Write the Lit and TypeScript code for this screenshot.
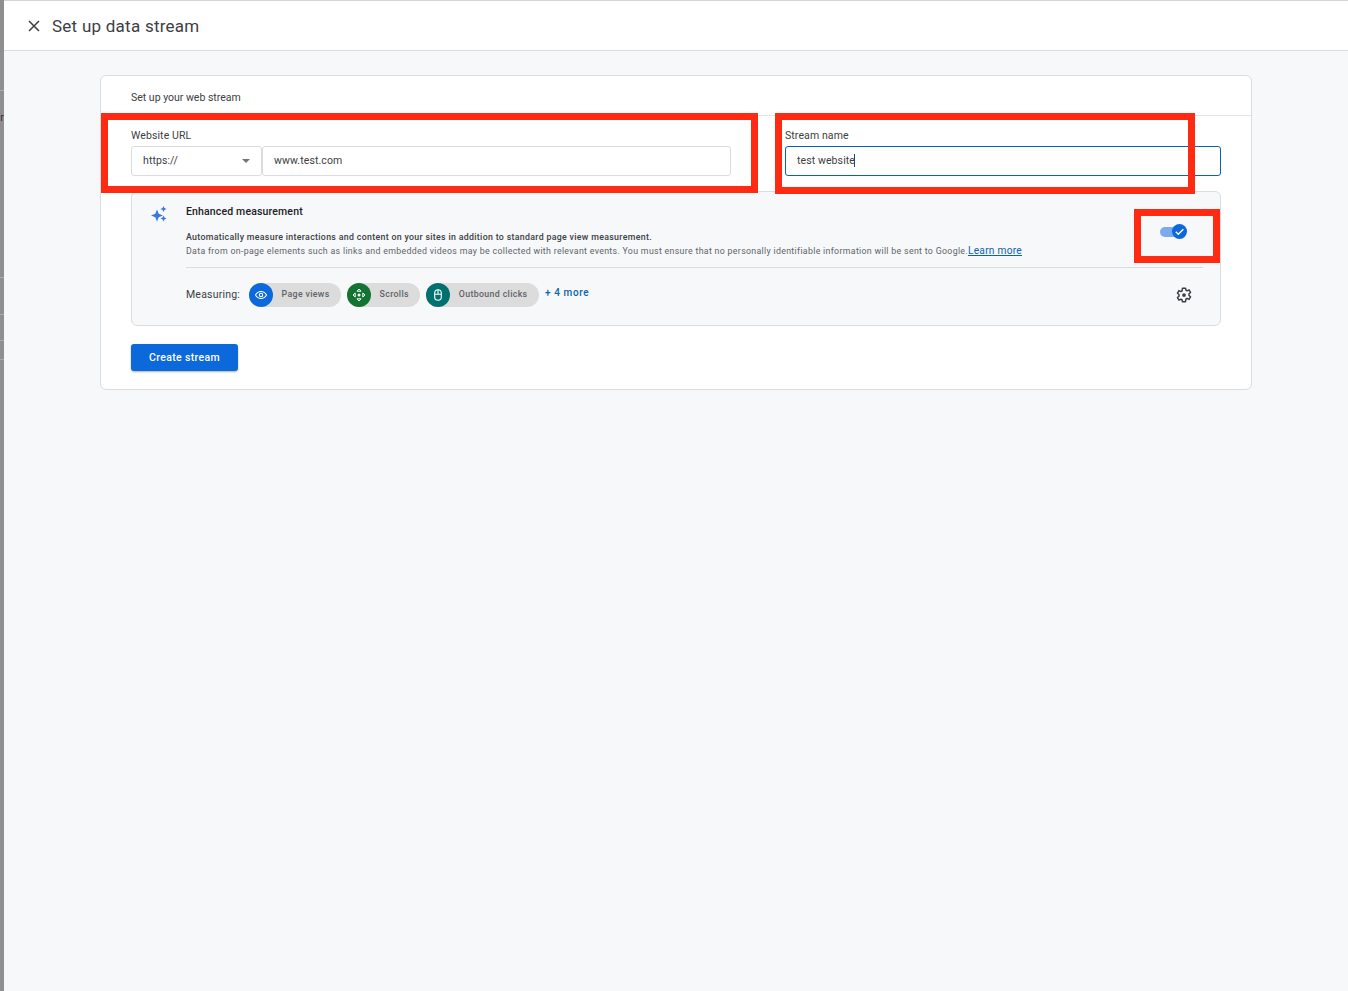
import { LitElement, html, css } from "lit";
import { customElement } from "lit/decorators.js";

@customElement("app-root")
export class AppRoot extends LitElement {
  static styles = css`
    :host { display: block; position: relative; height: 991px; overflow: hidden; font-family: Roboto, "Liberation Sans", sans-serif; color: #3c4043; background: #f6f8fa; }
    * { box-sizing: border-box; }
    .strip { position: absolute; left: 0; top: 0; bottom: 0; width: 4px; background: #8f8f8f; z-index: 3; overflow: hidden; }
    .strip i { position: absolute; left: 0; width: 4px; height: 1px; background: #a9a9a9; }
    .strip span { position: absolute; right: 0; top: 111px; font-size: 11px; line-height: 13px; color: #333; }
    .header { height: 51px; background: #fff; border-top: 1px solid #d4d4d4; border-bottom: 1px solid #dadce0; display: flex; align-items: center; padding-left: 26px; gap: 10px; }
    .header svg { display: block; flex: none; }
    .header h1 { margin: 0; font-size: 17px; font-weight: 400; letter-spacing: 0.25px; color: #3c4043; line-height: 24px; }
    .main { padding: 24px 96px 0 100px; }
    .card { background: #fff; border: 1px solid #dadce0; border-radius: 6px; height: 315px; }
    .card-title { height: 40px; border-bottom: 1px solid #e3e5e8; padding: 15px 30px 0; font-size: 10.5px; line-height: 14px; letter-spacing: 0; color: #3c4043; }
    .body { padding: 12px 30px 0; }
    .fields { display: flex; height: 48px; }
    .label { font-size: 10.5px; line-height: 16px; height: 18px; letter-spacing: 0.1px; color: #3c4043; }
    .url-field { width: 600px; margin-right: 54px; flex: none; }
    .controls { display: flex; }
    .box { height: 30px; border: 1px solid #dadce0; border-radius: 3px; display: flex; align-items: center; padding: 0 11px 2px; font-size: 10.5px; letter-spacing: 0.1px; color: #3c4043; background: #fff; }
    .select { width: 131px; justify-content: space-between; padding-right: 11px; }
    .caret { width: 0; height: 0; border-left: 4.5px solid transparent; border-right: 4.5px solid transparent; border-top: 4.5px solid #70757a; margin-top: 2px; }
    .url { width: 469px; }
    .name-field { flex: 1; }
    .name { border-color: #0b63ae; }
    .cursor { display: inline-block; width: 1px; height: 13px; background: #0b4f8f; margin-left: -1px; }
    .em { margin-top: 15px; height: 135px; background: #f6f8fa; border: 1px solid #dadce0; border-radius: 6px; display: flex; padding: 0 17px 0 18px; }
    .spark { flex: none; width: 36px; padding-top: 13px; }
    .spark svg { display: block; }
    .em-main { flex: 1; min-width: 0; }
    .em-top { display: flex; justify-content: space-between; height: 76px; border-bottom: 1px solid #dadce0; }
    .em-title { font-size: 10.5px; line-height: 14px; font-weight: 500; color: #202124; margin-top: 13px; letter-spacing: 0.15px; }
    .em-desc { margin-top: 12px; font-size: 8.8px; line-height: 13px; letter-spacing: 0.315px; color: #5f6368; white-space: nowrap; }
    .em-desc b { font-weight: 500; color: #3c4043; }
    .em-desc a { color: #0b63ae; text-decoration: underline; font-size: 10.2px; letter-spacing: 0.25px; }
    .toggle { position: relative; width: 28px; height: 16px; margin: 32px 16px 0 0; flex: none; }
    .track { position: absolute; left: 1px; top: 3px; width: 24px; height: 10px; border-radius: 5px; background: #7baaf0; }
    .thumb { position: absolute; right: 0; top: 0; width: 15px; height: 15px; border-radius: 50%; background: #0b69dc; display: flex; align-items: center; justify-content: center; }
    .em-bottom { display: flex; align-items: center; height: 53px; position: relative; }
    .m-label { font-size: 10.5px; letter-spacing: 0.2px; color: #3c4043; width: 63px; flex: none; }
    .chip { display: flex; align-items: center; height: 24px; border-radius: 12px; background: #dcdcdc; margin-right: 6px; }
    .chip .ic { width: 24px; height: 24px; border-radius: 50%; display: flex; align-items: center; justify-content: center; flex: none; }
    .chip span { font-size: 8.8px; letter-spacing: 0.34px; color: #5f6368; font-weight: 500; padding: 0 11.4px 2px 8.6px; }
    .more { font-size: 10px; letter-spacing: 0.62px; color: #0b63ae; font-weight: 500; margin-top: -4px; }
    .gear { position: absolute; right: 10px; top: 18px; display: block; }
    .btn { margin-top: 18px; width: 107px; height: 27px; border-radius: 3px; background: #0b69dc; color: #fff; font-size: 10.5px; font-weight: 500; letter-spacing: 0.35px; display: flex; align-items: center; justify-content: center; box-shadow: 0 1px 2px rgba(60,64,67,.4); }
    .mark { position: absolute; border: 7px solid #ff2a12; z-index: 2; pointer-events: none; }
    .m1 { left: 101px; top: 113px; width: 657px; height: 80px; }
    .m2 { left: 775px; top: 113px; width: 420px; height: 81px; }
    .m3 { left: 1134px; top: 209px; width: 86px; height: 54px; }
  `;

  render() {
    return html`
      <div class="strip">
        <i style="top:90px"></i><i style="top:277px"></i><i style="top:314px"></i><i style="top:340px"></i><i style="top:359px"></i>
        <span>r</span>
      </div>
      <div class="header">
        <svg width="16" height="16" viewBox="0 0 16 16"><path d="M3 3l10 10M13 3L3 13" stroke="#3c4043" stroke-width="1.500" fill="none"/></svg>
        <h1>Set up data stream</h1>
      </div>
      <div class="main">
        <div class="card">
          <div class="card-title">Set up your web stream</div>
          <div class="body">
            <div class="fields">
              <div class="url-field">
                <div class="label">Website URL</div>
                <div class="controls">
                  <div class="box select">https://<span class="caret"></span></div>
                  <div class="box url">www.test.com</div>
                </div>
              </div>
              <div class="name-field">
                <div class="label">Stream name</div>
                <div class="box name">test website<span class="cursor"></span></div>
              </div>
            </div>
            <div class="em">
              <div class="spark">
                <svg width="18" height="18" viewBox="0 0 18 18" fill="#3a78dc">
                  <path d="M7 4.500l1.700 4.300L13 10.500l-4.300 1.700L7 16.500l-1.700-4.300L1 10.500l4.300-1.700z"/>
                  <path d="M13.500 1l.9 2.100 2.100.9-2.100.9-.9 2.100-.9-2.100-2.100-.9 2.100-.9z"/>
                  <path d="M13.500 10.500l.9 2.100 2.100.9-2.100.9-.9 2.100-.9-2.100-2.100-.9 2.100-.9z"/>
                </svg>
              </div>
              <div class="em-main">
                <div class="em-top">
                  <div>
                    <div class="em-title">Enhanced measurement</div>
                    <div class="em-desc"><b>Automatically measure interactions and content on your sites in addition to standard page view measurement.</b><br>Data from on-page elements such as links and embedded videos may be collected with relevant events. You must ensure that no personally identifiable information will be sent to Google.<a>Learn more</a></div>
                  </div>
                  <div class="toggle">
                    <div class="track"></div>
                    <div class="thumb"><svg width="11" height="11" viewBox="0 0 11 11"><path d="M1.800 5.800l2.500 2.400 5-5" stroke="#fff" stroke-width="1.400" fill="none"/></svg></div>
                  </div>
                </div>
                <div class="em-bottom">
                  <div class="m-label">Measuring:</div>
                  <div class="chip"><div class="ic" style="background:#0b69dc">
                    <svg width="14" height="14" viewBox="0 0 14 14" fill="none" stroke="#fff"><path d="M1.500 7C3 4.500 5 3.500 7 3.500s4 1 5.500 3.500C11 9.500 9 10.500 7 10.500S3 9.500 1.500 7z" stroke-width="1.100"/><circle cx="7" cy="7" r="1.700" stroke-width="1.100"/></svg>
                  </div><span>Page views</span></div>
                  <div class="chip"><div class="ic" style="background:#137333">
                    <svg width="14" height="14" viewBox="0 0 14 14" fill="#fff"><circle cx="7" cy="7" r="1.500"/><path d="M7 1l2 2.200H5zM7 13l2-2.200H5zM1 7l2.200-2v4zM13 7l-2.200-2v4z" fill="none" stroke="#fff" stroke-width="1"/></svg>
                  </div><span>Scrolls</span></div>
                  <div class="chip"><div class="ic" style="background:#00716f">
                    <svg width="14" height="14" viewBox="0 0 14 14" fill="none" stroke="#fff" stroke-width="1.100"><rect x="3.700" y="1.800" width="6.600" height="10.400" rx="3.300"/><path d="M3.700 6.200h6.600M7 1.800v4.400"/></svg>
                  </div><span>Outbound clicks</span></div>
                  <div class="more">+ 4 more</div>
                  <svg class="gear" width="18" height="18" viewBox="0 0 24 24" fill="none" stroke="#3c4043" stroke-width="2"><path d="M10 3h4l.6 2.600 1.700.8 2.400-1.200 2 3.400-2 1.800v2.200l2 1.800-2 3.400-2.400-1.200-1.700.8L14 21h-4l-.6-2.600-1.700-.8-2.400 1.200-2-3.400 2-1.800v-2.200l-2-1.800 2-3.400 2.400 1.200 1.700-.8z" stroke-linejoin="round"/><circle cx="12" cy="12" r="2.500" fill="#3c4043" stroke="none"/></svg>
                </div>
              </div>
            </div>
            <div class="btn">Create stream</div>
          </div>
        </div>
      </div>
      <div class="mark m1"></div>
      <div class="mark m2"></div>
      <div class="mark m3"></div>
    `;
  }
}
